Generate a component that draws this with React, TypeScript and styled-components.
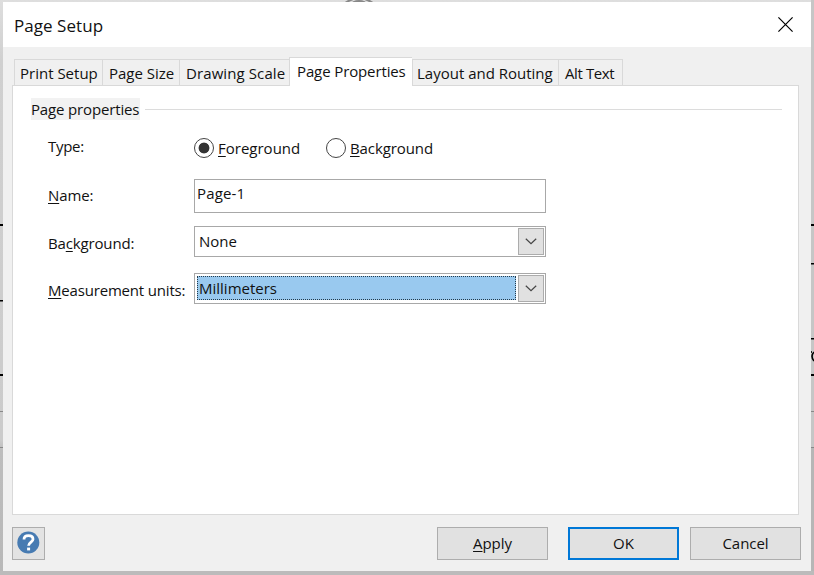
import React from 'react';
import styled, { createGlobalStyle } from 'styled-components';

const GlobalStyle = createGlobalStyle`
  *, *::before, *::after { box-sizing: border-box; }
  body { margin: 0; overflow: hidden; }
`;

const Desktop = styled.div`
  position: relative;
  width: 814px;
  height: 575px;
  padding: 2px 3px 3px;
  overflow: hidden;
  background: linear-gradient(#dedede 0, #d0d0d0 60px, #cbcbcb 440px, #bdbdbd 450px, #b8b8b8 100%);
  font: 15px/20px 'Open Sans', 'Noto Sans', sans-serif;
  color: #111;
`;

const Backdrop = styled.svg`
  position: absolute;
  inset: 0;
`;

const Dialog = styled.main`
  position: relative;
  display: flex;
  flex-direction: column;
  width: 808px;
  height: 569px;
  background: #f0f0f0;
`;

const TitleBar = styled.header`
  display: flex;
  justify-content: space-between;
  height: 45px;
  padding: 13px 18px 0 11px;
  background: #fff;
`;

const Title = styled.h1`
  margin: 0;
  font-size: 17px;
  line-height: 22px;
  font-weight: 400;
  letter-spacing: 0.05px;
`;

const CloseButton = styled.button`
  width: 15px;
  height: 15px;
  margin-top: 2px;
  padding: 0;
  border: 0;
  background: none;
  svg { display: block; }
`;

const TabList = styled.nav`
  position: relative;
  z-index: 1;
  display: flex;
  align-items: flex-end;
  height: 38px;
  padding-left: 11px;
`;

const Tab = styled.button<{ $width: number; $indent: number; $spacing?: number; $active?: boolean }>`
  width: ${p => p.$width}px;
  height: ${p => (p.$active ? 29 : 26)}px;
  margin-bottom: ${p => (p.$active ? -1 : 0)}px;
  padding: 3px 0 ${p => (p.$active ? 5 : 3)}px ${p => p.$indent}px;
  border: 1px solid #d9d9d9;
  border-right-width: 0;
  border-bottom: 0;
  background: ${p => (p.$active ? '#fff' : '#f0f0f0')};
  color: inherit;
  font: inherit;
  letter-spacing: ${p => p.$spacing ?? 0}px;
  text-align: left;
  white-space: nowrap;
  &:last-child { border-right-width: 1px; }
`;

const Panel = styled.section`
  width: 787px;
  height: 430px;
  margin-left: 9px;
  padding: 12px 16px 0 18px;
  border: 1px solid #d9d9d9;
  background: #fff;
`;

const GroupHeading = styled.div`
  display: flex;
  align-items: center;
  gap: 5px;
  height: 22px;
  &::after {
    content: '';
    flex: 1;
    height: 1px;
    background: #dcdcdc;
  }
`;

const GroupTitle = styled.h2`
  width: 109px;
  margin: 0;
  font: inherit;
  line-height: 22px;
  letter-spacing: -0.15px;
  white-space: nowrap;
  background: #f2f2f2;
`;

const Row = styled.div<{ $height: number; $gap: number }>`
  display: grid;
  grid-template-columns: 146px 352px;
  align-items: start;
  height: ${p => p.$height}px;
  margin: ${p => p.$gap}px 0 0 17px;
`;

const Label = styled.label<{ $top: number; $spacing?: number }>`
  padding-top: ${p => p.$top}px;
  letter-spacing: ${p => p.$spacing ?? 0}px;
  white-space: nowrap;
`;

const Key = styled.span`
  text-decoration: underline;
  text-decoration-thickness: 1px;
  text-underline-offset: 2px;
  text-decoration-skip-ink: none;
`;

const RadioGroup = styled.div`
  display: grid;
  grid-template-columns: 132px 120px;
  padding-top: 2px;
`;

const Radio = styled.label<{ $spacing: number }>`
  display: flex;
  gap: 4px;
  letter-spacing: ${p => p.$spacing}px;
`;

const RadioMark = styled.span<{ $checked?: boolean }>`
  width: 20px;
  height: 20px;
  border: 1.2px solid #444;
  border-radius: 50%;
  background: ${p => (p.$checked ? 'radial-gradient(circle, #333 5px, #fff 5.8px)' : '#fff')};
`;

const TextField = styled.div`
  height: 34px;
  padding: 3px 0 0 2px;
  border: 1px solid #a8a8a8;
  letter-spacing: 0.15px;
`;

const Select = styled.div`
  display: grid;
  grid-template-columns: 320px 26px;
  gap: 2px;
  height: 31px;
  padding: 1px;
  border: 1px solid #a8a8a8;
`;

const Value = styled.span<{ $selected?: boolean }>`
  height: 24px;
  margin: 1px 0 0 1px;
  padding: 1px 0 0 1px;
  border: 1px dotted ${p => (p.$selected ? '#233b4c' : 'transparent')};
  background: ${p => (p.$selected ? '#99c9ef' : 'transparent')};
`;

const DropButton = styled.button`
  display: flex;
  justify-content: center;
  height: 27px;
  padding: 9px 1px 0 0;
  border: 1px solid #acacac;
  background: #e1e1e1;
`;

const Footer = styled.footer`
  display: flex;
  padding: 12px 0 0 9px;
`;

const HelpButton = styled.button`
  width: 33px;
  height: 33px;
  margin-right: auto;
  padding: 0 0 2px 4px;
  border: 1px solid #adadad;
  background: #e3e3e3;
  svg { display: block; }
`;

const Actions = styled.div`
  display: grid;
  grid-template-columns: repeat(3, 111px);
  column-gap: 11px;
  margin-right: 10px;
`;

const ActionButton = styled.button<{ $primary?: boolean; $first?: boolean }>`
  height: 33px;
  margin: 0 ${p => (p.$first ? '9px 0 -9px' : '0')};
  padding: 0 0 1px;
  border: ${p => (p.$primary ? '2px solid #0078d7' : '1px solid #adadad')};
  background: #e1e1e1;
  color: inherit;
  font: inherit;
  letter-spacing: -0.05px;
`;

const Chevron = () => (
  <svg width="12" height="7" viewBox="0 0 12 7" fill="none" stroke="#444" strokeWidth="1.2">
    <path d="M.8.8 6 5.6 11.2.8" />
  </svg>
);

export default function App() {
  return (
    <Desktop>
      <GlobalStyle />
      <Backdrop width="814" height="575">
        <path d="M811 0h3v575h-3z" fill="#c6c6c6" />
        <path d="M811 448h3v127h-3z" fill="#b6b6b6" />
        <path d="M0 571h814v4H0z" fill="#bbb" />
        <path d="M345.5 3Q359-7 372.5 3" fill="none" stroke="#888" strokeWidth="2.2" />
        <ellipse cx="359" cy="4" rx="8" ry="4" fill="#888" />
        <path d="M0 224h3v2H0zM0 300h3v1.5H0zM0 374h3v2H0zM810 224h4v2h-4zM810 263h4v1.5h-4zM810 338h4v1.5h-4zM810 374h4v2h-4z" fill="#000" />
        <path d="M0 411h3v1H0zM0 447h3v1H0zM810 411h4v1h-4zM810 447h4v1h-4z" fill="#888" />
        <path d="M814 352q-4 4 0 9" fill="none" stroke="#000" strokeWidth="1.6" />
        <path d="M811 351h1v2h-1z" fill="#222" />
      </Backdrop>
      <Dialog>
        <TitleBar>
          <Title>Page Setup</Title>
          <CloseButton aria-label="Close">
            <svg width="15" height="15" viewBox="0 0 15 15" stroke="#000" strokeWidth="1.2">
              <path d="M.4.4 14.6 14.6M14.6.4.4 14.6" />
            </svg>
          </CloseButton>
        </TitleBar>
        <TabList>
          <Tab $width={88} $indent={5}>Print Setup</Tab>
          <Tab $width={77} $indent={6}>Page Size</Tab>
          <Tab $width={110} $indent={6} $spacing={0.1}>Drawing Scale</Tab>
          <Tab $width={123} $indent={7} $spacing={-0.12} $active>Page Properties</Tab>
          <Tab $width={146} $indent={4}>Layout and Routing</Tab>
          <Tab $width={65} $indent={6} $spacing={-0.4}>Alt Text</Tab>
        </TabList>
        <Panel>
          <GroupHeading><GroupTitle>Page properties</GroupTitle></GroupHeading>
          <Row $height={22} $gap={16}>
            <Label $top={0} $spacing={-0.3}>Type:</Label>
            <RadioGroup>
              <Radio $spacing={0}><RadioMark $checked /><span><Key>F</Key>oreground</span></Radio>
              <Radio $spacing={-0.1}><RadioMark /><span><Key>B</Key>ackground</span></Radio>
            </RadioGroup>
          </Row>
          <Row $height={34} $gap={21}>
            <Label $top={6} $spacing={-0.1}><Key>N</Key>ame:</Label>
            <TextField>Page-1</TextField>
          </Row>
          <Row $height={31} $gap={13}>
            <Label $top={7} $spacing={-0.15}>Ba<Key>c</Key>kground:</Label>
            <Select><Value>None</Value><DropButton aria-label="Open"><Chevron /></DropButton></Select>
          </Row>
          <Row $height={31} $gap={16}>
            <Label $top={7} $spacing={-0.18}><Key>M</Key>easurement units:</Label>
            <Select><Value $selected>Millimeters</Value><DropButton aria-label="Open"><Chevron /></DropButton></Select>
          </Row>
        </Panel>
        <Footer>
          <HelpButton aria-label="Help">
            <svg width="23" height="23" viewBox="0 0 23 23" fill="none">
              <circle cx="11.3" cy="11.5" r="11" fill="#477bb2" />
              <path d="M7 8.5Q7 4.7 11.5 4.7T16 8.2C16 11 11.6 11.3 11.6 14.8" stroke="#fff" strokeWidth="2.8" />
              <path d="M10.1 16.6h3v2.8h-3z" fill="#fff" />
            </svg>
          </HelpButton>
          <Actions>
            <ActionButton $first><Key>A</Key>pply</ActionButton>
            <ActionButton $primary>OK</ActionButton>
            <ActionButton>Cancel</ActionButton>
          </Actions>
        </Footer>
      </Dialog>
    </Desktop>
  );
}
